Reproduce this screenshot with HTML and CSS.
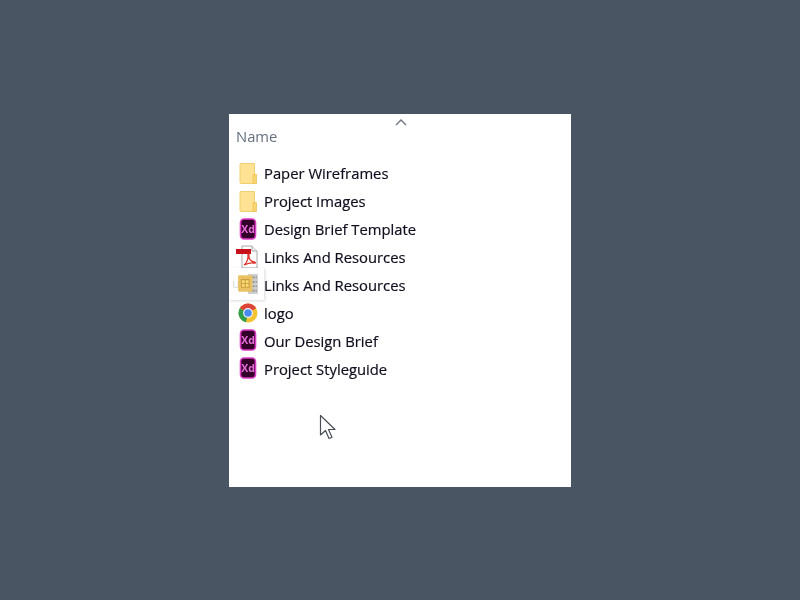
FILE: index.html
```html
<!DOCTYPE html>
<html lang="en">
<head>
    <meta charset="UTF-8">
    <meta name="viewport" content="width=device-width, initial-scale=1.0">
    <title>Project files</title>
    <link rel="stylesheet" href="styles.css">
</head>
<body>
    <div class="panel">
        <div class="panel-head">
            <span class="col-name">Name</span>
            <svg class="sort" width="12" height="7" viewBox="0 0 12 7"><path d="M1 6l5-5 5 5" fill="none" stroke="#6d7480" stroke-width="1.4"/></svg>
        </div>
        <ul class="files">
            <li class="file">
                <svg class="ico" viewBox="0 0 18 22">
                    <path d="M2 1.500h13.500v20H2a1 1 0 0 1-1-1v-18a1 1 0 0 1 1-1z" fill="#ffe293" stroke="#f2cf6c"/>
                    <path d="M14 12.500h3.500v9H14z" fill="#f9d56f" stroke="#eec25a" stroke-width=".8"/>
                </svg><span class="file-name">Paper Wireframes</span>
            </li>
            <li class="file">
                <svg class="ico" viewBox="0 0 18 22">
                    <path d="M2 1.500h13.500v20H2a1 1 0 0 1-1-1v-18a1 1 0 0 1 1-1z" fill="#ffe293" stroke="#f2cf6c"/>
                    <path d="M14 12.500h3.500v9H14z" fill="#f9d56f" stroke="#eec25a" stroke-width=".8"/>
                </svg><span class="file-name">Project Images</span>
            </li>
            <li class="file">
                <svg class="ico" viewBox="0 0 18 22">
                    <rect x="1.500" y="1" width="15" height="20" rx="3.500" fill="#33002a" stroke="#e03cc8" stroke-width="1.600"/>
                    <text x="9" y="15" class="xd-text" text-anchor="middle">Xd</text>
                </svg><span class="file-name">Design Brief Template</span>
            </li>
            <li class="file">
                <svg class="ico ico-pdf" viewBox="0 0 22 24">
                    <path d="M6 1h10l5 5v17H6z" fill="#fff" stroke="#a9a9a9"/>
                    <path d="M16 1v5h5" fill="#f1f1f1" stroke="#a9a9a9"/>
                    <path d="M0 4h15v5H0z" fill="#c8101b"/>
                    <path d="M8 20c3-2 4.500-7 4-10-.5-1.500 1.500-1 1 1-.5 3 2 5.500 5.500 6 1.500.5 1 1.500-1 1-3-.5-6 .5-9.500 2z" fill="none" stroke="#e0342c" stroke-width="1.300"/>
                </svg><span class="file-name">Links And Resources</span>
            </li>
            <li class="file"><span class="ico"></span><span class="file-name">Links And Resources</span></li>
            <li class="file">
                <svg class="ico ico-chrome" viewBox="0 0 20 20">
                    <circle cx="10" cy="10" r="9.500" fill="#f4c430"/>
                    <path d="M10 10L1.800 5.200A9.500 9.500 0 0 1 18.200 5.200z" fill="#dc4437"/>
                    <path d="M10 10L1.800 5.200A9.500 9.500 0 0 0 8 19.300z" fill="#2f9e4f"/>
                    <circle cx="10" cy="10" r="4.900" fill="#f4f6fb"/>
                    <circle cx="10" cy="10" r="3.800" fill="#4a8bf0"/>
                </svg><span class="file-name">logo</span>
            </li>
            <li class="file">
                <svg class="ico ico-raised" viewBox="0 0 18 22">
                    <rect x="1.500" y="1" width="15" height="20" rx="3.500" fill="#33002a" stroke="#e03cc8" stroke-width="1.600"/>
                    <text x="9" y="15" class="xd-text" text-anchor="middle">Xd</text>
                </svg><span class="file-name">Our Design Brief</span>
            </li>
            <li class="file">
                <svg class="ico ico-raised" viewBox="0 0 18 22">
                    <rect x="1.500" y="1" width="15" height="20" rx="3.500" fill="#33002a" stroke="#e03cc8" stroke-width="1.600"/>
                    <text x="9" y="15" class="xd-text" text-anchor="middle">Xd</text>
                </svg><span class="file-name">Project Styleguide</span>
            </li>
        </ul>

        <!-- drag ghost over the fifth row -->
        <div class="drag-ghost">
            <span class="ghost-label">u</span>
            <svg class="ghost-ico" width="22" height="22" viewBox="0 0 20 20">
                <rect x="10" y="1" width="9" height="18" fill="#c4c4c4"/>
                <path d="M11 4h7M11 8h7M11 12h7M11 16h7" stroke="#7d7d7d" stroke-width="1.500" stroke-dasharray="2 1"/>
                <rect x="1" y="2" width="13" height="15" rx="1" fill="#e6b84a"/>
                <path d="M4 6h7v7H4z" fill="#f6d65a" stroke="#c98f22"/>
                <path d="M4 9.500h7M7.500 6v7" stroke="#c98f22"/>
            </svg>
        </div>

        <svg class="pointer" width="18" height="27" viewBox="0 0 18 27">
            <path d="M1.500 1.500v19.500l5-4.500 3.500 8 3-1.300-3.500-7.700h6.500z" fill="#fff" stroke="#4a4f57" stroke-width="1.200" stroke-linejoin="round"/>
        </svg>
    </div>
</body>
</html>
```

FILE: styles.css
```css
* {
    box-sizing: border-box;
    margin: 0;
    padding: 0;
}
body {
    background-color: #4a5563;
    height: 100vh;
    padding-top: 114px;
    overflow: hidden;
    font-family: 'Open Sans', 'Noto Sans', sans-serif;
}
.panel {
    position: relative;
    width: 342px;
    height: 373px;
    margin: 0 auto;
    background: #fff;
}
.panel-head {
    position: relative;
    height: 45px;
    padding: 11px 0 0 7px;
}
.col-name {
    font-size: 14.800px;
    line-height: 20px;
    color: #66707f;
    filter: blur(.3px);
}
.sort {
    position: absolute;
    left: 166px;
    top: 5px;
}
.files {
    list-style: none;
    filter: blur(.3px);
}
.file {
    display: flex;
    align-items: center;
    height: 28px;
    padding-left: 10px;
    font-size: 14.800px;
    color: #0f0e1e;
    white-space: nowrap;
}
.file-name {
    -webkit-text-stroke: .2px #0f0e1e;
}
.ico {
    flex: none;
    width: 18px;
    height: 22px;
    margin-right: 7px;
}
.ico-raised {
    margin-bottom: 2px;
}
.ico-chrome {
    width: 20px;
    height: 20px;
    margin-left: -1px;
    margin-right: 6px;
}
.ico-pdf {
    width: 22px;
    height: 24px;
    margin-left: -3px;
    margin-right: 6px;
}
.xd-text {
    font-family: 'Open Sans', sans-serif;
    font-size: 10.500px;
    font-weight: 700;
    fill: #e56fd8;
}
.drag-ghost {
    position: absolute;
    left: 0;
    top: 154px;
    width: 35px;
    height: 32px;
    background: rgba(255, 255, 255, .9);
    box-shadow: 1px 1px 3px rgba(0, 0, 0, .15);
}
.ghost-label {
    position: absolute;
    left: 3px;
    top: 7px;
    font-size: 13px;
    line-height: 16px;
    color: #d5dbe2;
}
.ghost-ico {
    position: absolute;
    left: 8px;
    top: 5px;
    opacity: .85;
    filter: blur(.5px);
}
.pointer {
    position: absolute;
    left: 90px;
    top: 300px;
    filter: blur(.3px);
}
```
